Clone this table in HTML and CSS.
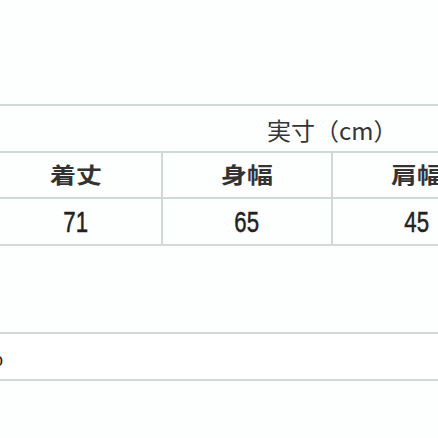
FILE: index.html
```html
<!DOCTYPE html>
<html lang="ja">
<head>
<meta charset="utf-8">
<link rel="stylesheet" href="styles.css">
</head>
<body>
<div class="page">
  <div class="sheet">
    <div class="title-row"><span class="title">実寸（cm）</span></div>
    <div class="grid-row head">
      <div class="cell"><span class="cjk">着丈</span></div>
      <div class="cell"><span class="cjk">身幅</span></div>
      <div class="cell"><span class="cjk">肩幅</span></div>
    </div>
    <div class="grid-row data">
      <div class="cell"><span class="num">71</span></div>
      <div class="cell"><span class="num">65</span></div>
      <div class="cell"><span class="num">45</span></div>
    </div>
  </div>
  <div class="note"><span class="cut">o</span></div>
</div>
</body>
</html>
```

FILE: styles.css
```css
html, body {
  margin: 0;
  padding: 0;
  background: #fdfefe;
  overflow: hidden;
}
.page {
  width: 438px;
  height: 438px;
  padding-top: 104px;
  box-sizing: border-box;
  overflow: hidden;
  color: #2a2c2c;
  font-family: "Noto Sans CJK JP", "Noto Sans", sans-serif;
}
.sheet {
  border-top: 2px solid #d0d8d8;
}
.title-row {
  height: 45px;
  border-bottom: 2px solid #d0d8d8;
  display: flex;
  align-items: center;
  padding-left: 267px;
}
.title {
  font-size: 24px;
  line-height: 1;
  white-space: nowrap;
  position: relative;
  top: 1px;
  color: #333535;
}
.grid-row {
  display: grid;
  grid-template-columns: 170px 170px 170px;
  margin-left: -9px;
  border-bottom: 2px solid #d0d8d8;
}
.grid-row.head { height: 44px; }
.grid-row.data { height: 45px; }
.cell {
  box-sizing: border-box;
  display: flex;
  align-items: center;
  justify-content: center;
  white-space: nowrap;
}
.cell + .cell {
  border-left: 2px solid #d0d8d8;
}
.cjk {
  display: inline-block;
  font-size: 22px;
  line-height: 1;
  font-weight: 700;
  transform: scaleX(1.18);
  position: relative;
  top: -2px;
  color: #333;
}
.num {
  display: inline-block;
  font-family: "Liberation Sans", Arial, sans-serif;
  font-size: 30px;
  line-height: 1;
  transform: scaleX(0.74);
  color: #222;
  -webkit-text-stroke: 0.5px #222;
}
.note {
  margin-top: 86px;
  height: 45px;
  border-top: 2px solid #d0d8d8;
  border-bottom: 2px solid #d0d8d8;
  display: flex;
  align-items: center;
  background: #ffffff;
}
.cut {
  font-family: "Liberation Sans", Arial, sans-serif;
  font-size: 18px;
  margin-left: -7px;
  color: #222;
  position: relative;
  top: 4px;
}
```
